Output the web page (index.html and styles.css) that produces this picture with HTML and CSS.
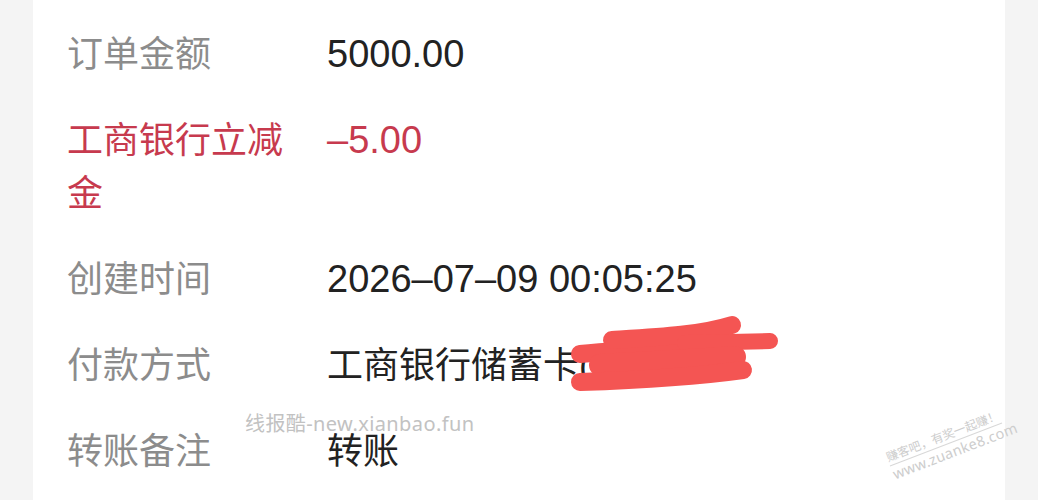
FILE: index.html
```html
<!DOCTYPE html>
<html lang="zh-CN">
<head>
<meta charset="utf-8">
<title>订单详情</title>
<link rel="stylesheet" href="styles.css">
</head>
<body>
<div class="page">
  <div class="card">
    <dl class="info">
      <dt class="label">订单金额</dt>
      <dd class="value num">5000.00</dd>
      <dt class="label red">工商银行立减金</dt>
      <dd class="value num red">–5.00</dd>
      <dt class="label">创建时间</dt>
      <dd class="value num">2026–07–09 00:05:25</dd>
      <dt class="label">付款方式</dt>
      <dd class="value">工商银行储蓄卡(</dd>
      <dt class="label">转账备注</dt>
      <dd class="value">转账</dd>
    </dl>
  </div>
  <svg class="scribble" width="230" height="90" viewBox="0 0 230 90">
    <g fill="none" stroke="#f45553" stroke-linecap="round" stroke-linejoin="round">
      <path d="M20 44 C 60 40, 110 38, 150 36" stroke-width="18"/>
      <path d="M52 30 C 100 27, 140 25, 172 15" stroke-width="18"/>
      <path d="M125 33 L 210 31" stroke-width="16"/>
      <path d="M40 55 C 90 52, 140 50, 175 47" stroke-width="22"/>
      <path d="M20 72 C 80 70, 140 66, 183 60" stroke-width="18"/>
    </g>
  </svg>
  <div class="wm-site">线报酷-new.xianbao.fun</div>
  <div class="wm-stamp">
    <div class="wm-stamp-top">赚客吧，有奖一起赚！</div>
    <div class="wm-stamp-bottom">www.zuanke8.com</div>
  </div>
</div>
</body>
</html>
```

FILE: styles.css
```css
html, body {
  margin: 0;
  padding: 0;
}
body {
  background: #f4f4f4;
  font-family: "Liberation Sans", "Noto Sans CJK SC", sans-serif;
}
.page {
  position: relative;
  height: 500px;
  overflow: hidden;
  display: flex;
  padding: 0 33px;
}
.card {
  flex: 1;
  background: #ffffff;
  padding: 28px 34px 0;
}
.info {
  margin: 0;
  display: grid;
  grid-template-columns: 230px 1fr;
  column-gap: 30px;
  row-gap: 33px;
}
.label {
  margin: 0;
  font-size: 36px;
  line-height: 53px;
  color: #8c8c8c;
}
.value {
  margin: 0;
  font-size: 36px;
  line-height: 53px;
  color: #222222;
}
.num {
  font-size: 38px;
}
.red {
  color: #c73a4e;
}
.scribble {
  position: absolute;
  left: 560px;
  top: 310px;
}
.wm-site {
  position: absolute;
  left: 245px;
  top: 410px;
  font-family: "Noto Sans", "Noto Sans CJK SC", sans-serif;
  font-size: 20px;
  line-height: 28px;
  color: #c2c2c2;
  letter-spacing: 0.4px;
  white-space: nowrap;
}
.wm-stamp {
  position: absolute;
  left: 886px;
  top: 427px;
  width: 120px;
  transform: rotate(-21deg);
  transform-origin: center;
  color: #cdcdcd;
  font-family: "Noto Sans CJK SC", "Noto Sans", sans-serif;
  text-align: center;
  white-space: nowrap;
}
.wm-stamp-top {
  font-size: 12px;
  line-height: 16px;
  padding-bottom: 1px;
  border-bottom: 1px solid #d8d8d8;
}
.wm-stamp-bottom {
  font-family: "Noto Sans", sans-serif;
  font-size: 14.5px;
  line-height: 17px;
  letter-spacing: 0.3px;
}
```
